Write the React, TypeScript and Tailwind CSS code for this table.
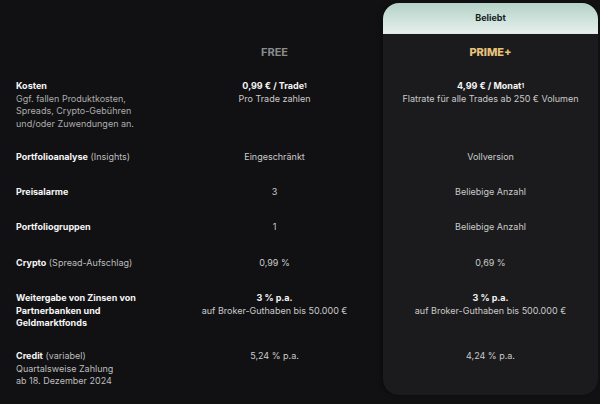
import React from "react";

type Row = {
  label: React.ReactNode;
  free: React.ReactNode;
  prime: React.ReactNode;
  height: number;
};

const Sup = () => <sup className="text-[6px] font-bold relative -top-[1px]">1</sup>;

const Value = ({ title, sub }: { title?: React.ReactNode; sub?: string }) => (
  <div className="flex flex-col items-center text-center">
    {title && <p className="font-bold text-[#f4f4f4]">{title}</p>}
    {sub && <p className="text-[#cacaca]">{sub}</p>}
  </div>
);

const Plain = ({ children }: { children: React.ReactNode }) => (
  <p className="text-center text-[#cacaca]">{children}</p>
);

const rows: Row[] = [
  {
    label: (
      <>
        <p className="font-bold text-[#f6f6f6]">Kosten</p>
        <p className="text-[#adadad]">
          Ggf. fallen Produktkosten, Spreads, Crypto-Gebühren und/oder
          Zuwendungen an.
        </p>
      </>
    ),
    free: (
      <Value
        title={
          <>
            0,99 € / Trade
            <Sup />
          </>
        }
        sub="Pro Trade zahlen"
      />
    ),
    prime: (
      <Value
        title={
          <>
            4,99 € / Monat
            <Sup />
          </>
        }
        sub="Flatrate für alle Trades ab 250 € Volumen"
      />
    ),
    height: 71,
  },
  {
    label: (
      <p className="text-[#bdbdbd]">
        <span className="font-bold text-[#f6f6f6]">Portfolioanalyse</span>{" "}
        (Insights)
      </p>
    ),
    free: <Plain>Eingeschränkt</Plain>,
    prime: <Plain>Vollversion</Plain>,
    height: 35,
  },
  {
    label: <p className="font-bold text-[#f6f6f6]">Preisalarme</p>,
    free: <Plain>3</Plain>,
    prime: <Plain>Beliebige Anzahl</Plain>,
    height: 35,
  },
  {
    label: <p className="font-bold text-[#f6f6f6]">Portfoliogruppen</p>,
    free: <Plain>1</Plain>,
    prime: <Plain>Beliebige Anzahl</Plain>,
    height: 36,
  },
  {
    label: (
      <p className="text-[#bdbdbd]">
        <span className="font-bold text-[#f6f6f6]">Crypto</span>{" "}
        (Spread-Aufschlag)
      </p>
    ),
    free: <Plain>0,99 %</Plain>,
    prime: <Plain>0,69 %</Plain>,
    height: 35,
  },
  {
    label: (
      <p className="font-bold text-[#f6f6f6]">
        Weitergabe von Zinsen von Partnerbanken und Geldmarktfonds
      </p>
    ),
    free: <Value title="3 % p.a." sub="auf Broker-Guthaben bis 50.000 €" />,
    prime: <Value title="3 % p.a." sub="auf Broker-Guthaben bis 500.000 €" />,
    height: 58,
  },
  {
    label: (
      <>
        <p className="text-[#bdbdbd]">
          <span className="font-bold text-[#f6f6f6]">Credit</span> (variabel)
        </p>
        <p className="text-[#bdbdbd]">Quartalsweise Zahlung</p>
        <p className="text-[#bdbdbd]">ab 18. Dezember 2024</p>
      </>
    ),
    free: <Plain>5,24 % p.a.</Plain>,
    prime: <Plain>4,24 % p.a.</Plain>,
    height: 45,
  },
];

const App = () => {
  return (
    <div className="w-[600px] h-[404px] overflow-hidden bg-[#111113] pt-[3px] font-['Inter','Liberation_Sans',sans-serif] text-[9px] leading-[12.5px] antialiased">
      <div className="flex">
        <section className="w-[166px] pl-4">
          <div className="h-[77px]" />
          {rows.map((row, i) => (
            <div key={i} className="w-[128px]" style={{ height: row.height }}>
              {row.label}
            </div>
          ))}
        </section>

        <section className="w-[217px]">
          <div className="h-[31px]" />
          <div className="h-[46px] pt-[11px]">
            <p className="text-center text-[11px] leading-[14px] font-bold text-[#8b8b8b]">
              FREE
            </p>
          </div>
          {rows.map((row, i) => (
            <div key={i} style={{ height: row.height }}>
              {row.free}
            </div>
          ))}
        </section>

        <section className="w-[215px] rounded-[16px] overflow-hidden bg-[#1b1b1d] shadow-[-2px_0_4px_rgba(0,0,0,0.35)]">
          <div className="h-[31px] flex items-center justify-center bg-gradient-to-b from-[#b3d2c7] to-[#e6efec] border-b border-[#dfe8e5]">
            <p className="text-[9px] font-bold text-[#17231f]">Beliebt</p>
          </div>
          <div className="h-[46px] pt-[11px]">
            <p className="text-center text-[11px] leading-[14px] font-extrabold text-[#e8c27c]">
              PRIME+
            </p>
          </div>
          {rows.map((row, i) => (
            <div key={i} style={{ height: row.height }}>
              {row.prime}
            </div>
          ))}
        </section>
      </div>
    </div>
  );
};

export default App;
